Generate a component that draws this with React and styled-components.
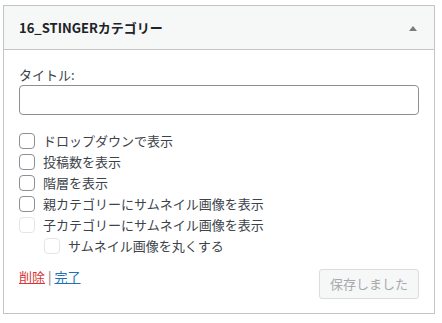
import React from "react";
import styled, { createGlobalStyle } from "styled-components";

const GlobalStyle = createGlobalStyle`
  body {
    margin: 0;
    background: #fff;
    font-family: "Noto Sans CJK JP", "Noto Sans", sans-serif;
    color: #3c434a;
    font-size: 13px;
  }
`;

const Page = styled.div`
  padding: 5px 8px 0 3px;
`;

const Widget = styled.div`
  width: 430px;
  border: 1px solid #c3c4c7;
  background: #fff;
`;

const Header = styled.div`
  display: flex;
  align-items: center;
  justify-content: space-between;
  height: 43px;
  padding: 0 17px 0 15px;
  background: #f6f7f7;
  border-bottom: 1px solid #c3c4c7;
`;

const Title = styled.h3`
  margin: 0;
  font-size: 13px;
  font-weight: 600;
  line-height: 20px;
  color: #1d2327;
`;

const Arrow = styled.span`
  width: 0;
  height: 0;
  border-left: 4px solid transparent;
  border-right: 4px solid transparent;
  border-bottom: 5px solid #787c82;
  margin-top: 1px;
`;

const Body = styled.div`
  padding: 15px 15px 0;
`;

const Label = styled.label`
  display: block;
  line-height: 20px;
`;

const TextInput = styled.input`
  box-sizing: border-box;
  display: block;
  width: 100%;
  height: 30px;
  margin: 0;
  border: 1px solid #8c8f94;
  border-radius: 4px;
  background: #fff;
  font: inherit;
`;

const Options = styled.div`
  display: flex;
  flex-direction: column;
  margin-top: 15px;
`;

const Row = styled.label`
  display: flex;
  align-items: center;
  gap: 8px;
  height: 21px;
  padding-left: ${(p) => (p.$indent ? "25px" : "0")};
  line-height: 21px;
  color: #3c434a;
`;

const Check = styled.input`
  appearance: none;
  box-sizing: border-box;
  width: 16px;
  height: 16px;
  margin: 0;
  flex: none;
  border: 1px solid ${(p) => (p.disabled ? "#e4e5e7" : "#8c8f94")};
  border-radius: 4px;
  background: #fff;
`;

const Footer = styled.div`
  display: flex;
  justify-content: space-between;
  align-items: flex-start;
  padding: 13px 15px 14px;
`;

const Links = styled.div`
  line-height: 16px;
  color: #a7aaad;
`;

const Link = styled.a`
  color: ${(p) => (p.$danger ? "#d63638" : "#2271b1")};
  text-decoration: underline;
`;

const Sep = styled.span`
  color: #8a6d6b;
  margin: 0 3px;
`;

const SaveButton = styled.button`
  box-sizing: border-box;
  height: 30px;
  padding: 0 10px;
  border: 1px solid #dcdcde;
  border-radius: 3px;
  background: #f6f7f7;
  color: #a7aaad;
  font: inherit;
  font-size: 13px;
  line-height: 28px;
`;

const options = [
  { text: "ドロップダウンで表示" },
  { text: "投稿数を表示" },
  { text: "階層を表示" },
  { text: "親カテゴリーにサムネイル画像を表示" },
  { text: "子カテゴリーにサムネイル画像を表示", disabled: true },
  { text: "サムネイル画像を丸くする", disabled: true, indent: true },
];

export default function App() {
  return (
    <Page>
      <GlobalStyle />
      <Widget>
        <Header>
          <Title>16_STINGERカテゴリー</Title>
          <Arrow />
        </Header>
        <Body>
          <Label htmlFor="title">タイトル:</Label>
          <TextInput id="title" type="text" />
          <Options>
            {options.map((o) => (
              <Row key={o.text} $indent={o.indent}>
                <Check type="checkbox" disabled={o.disabled} />
                {o.text}
              </Row>
            ))}
          </Options>
        </Body>
        <Footer>
          <Links>
            <Link $danger href="#">削除</Link>
            <Sep>|</Sep>
            <Link href="#">完了</Link>
          </Links>
          <SaveButton disabled>保存しました</SaveButton>
        </Footer>
      </Widget>
    </Page>
  );
}
